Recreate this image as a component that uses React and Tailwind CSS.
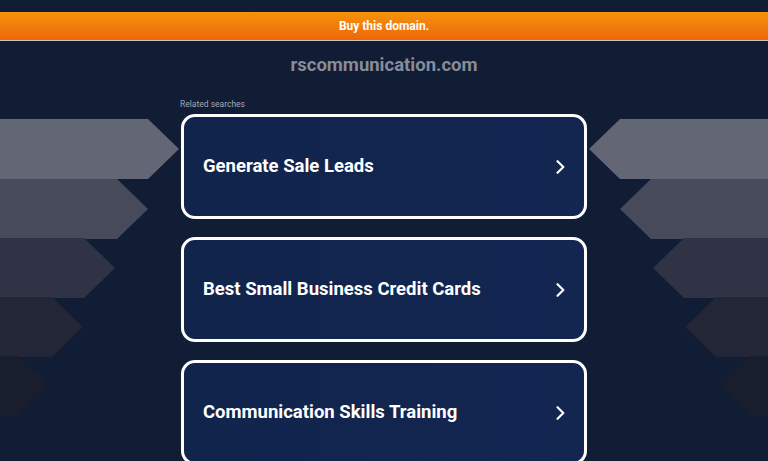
import React from 'react';

const stripes = [
  { y: 119, x: 148, fill: '#636674' },
  { y: 179, x: 117, fill: '#464a5a' },
  { y: 238, x: 84, fill: '#2f3345' },
  { y: 297, x: 52, fill: '#222636' },
  { y: 356, x: 18, fill: '#191e2f' },
];

const searches = [
  'Generate Sale Leads',
  'Best Small Business Credit Cards',
  'Communication Skills Training',
];

function Backdrop() {
  return (
    <svg className="absolute inset-0 pointer-events-none" width="768" height="461" viewBox="0 0 768 461">
      {stripes.map((s, i) => {
        const h = 60;
        const left = `0,${s.y} ${s.x},${s.y} ${s.x + 31},${s.y + h / 2} ${s.x},${s.y + h} 0,${s.y + h}`;
        const right = `768,${s.y} ${768 - s.x},${s.y} ${768 - s.x - 31},${s.y + h / 2} ${768 - s.x},${s.y + h} 768,${s.y + h}`;
        return (
          <g key={i} fill={s.fill}>
            <polygon points={left} />
            <polygon points={right} />
          </g>
        );
      })}
    </svg>
  );
}

function Chevron() {
  return (
    <svg width="20" height="20" viewBox="0 0 24 24" fill="none" stroke="white" strokeWidth="2.6" strokeLinecap="round" strokeLinejoin="round">
      <path d="M9 5l7 7-7 7" />
    </svg>
  );
}

export default function App() {
  return (
    <div className="relative w-full h-[461px] overflow-hidden bg-[#111c35] font-['Roboto',sans-serif]">
      <Backdrop />
      <div className="relative flex flex-col">
        <div className="h-3" />
        {/* barra de compra */}
        <div className="h-[29px] bg-gradient-to-b from-[#f5930a] to-[#ee660a] border-b border-[#c9c0b8] flex items-center justify-center">
          <span className="text-white text-[12px] font-bold">Buy this domain.</span>
        </div>

        <h1 className="mt-[12px] text-center text-[18.5px] leading-6 font-bold text-[#878c99]">rscommunication.com</h1>

        <div className="w-[406px] mx-auto mt-[22px]">
          <p className="text-[8.5px] leading-[10px] text-[#a3a8b4] -ml-px">Related searches</p>
          <div className="flex flex-col gap-[18px] mt-[5px]">
            {searches.map((s) => (
              <div key={s} className="h-[105px] shrink-0 rounded-[14px] border-[3px] border-white bg-gradient-to-r from-[#11244c] to-[#122651] flex items-center justify-between pl-[19px] pr-[14px]">
                <span className="text-white text-[18.5px] font-bold">{s}</span>
                <Chevron />
              </div>
            ))}
          </div>
        </div>
      </div>
    </div>
  );
}
